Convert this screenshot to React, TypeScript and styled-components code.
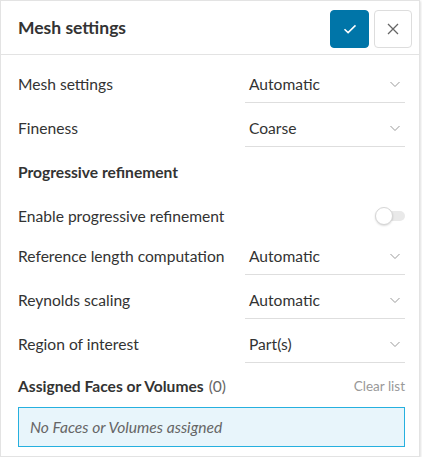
import React from "react";
import styled, { createGlobalStyle } from "styled-components";

const Global = createGlobalStyle`
  html, body { margin: 0; padding: 0; background: #ffffff; }
  body { font-family: Lato, "Open Sans", sans-serif; color: #333333; }
  * { box-sizing: border-box; }
`;

const Panel = styled.div`
  width: 420px;
  height: 457px;
  background: #ffffff;
  border: 1px solid #e3e3e3;
  box-shadow: 1px 1px 2px rgba(0, 0, 0, 0.12);
  display: flex;
  flex-direction: column;
`;

const Header = styled.div`
  height: 54px;
  display: flex;
  align-items: center;
  padding: 0 7px 0 17px;
  border-bottom: 1px solid #e3e3e3;
  gap: 5px;
`;

const Title = styled.h1`
  flex: 1;
  margin: 0;
  font-size: 17.5px;
  font-weight: 700;
  color: #333333;
`;

const IconButton = styled.button<{ $primary?: boolean }>`
  width: ${(p) => (p.$primary ? "39px" : "38px")};
  height: 38px;
  margin-top: 2px;
  border-radius: 4px;
  border: 1px solid ${(p) => (p.$primary ? "#0075a8" : "#dddddd")};
  background: ${(p) => (p.$primary ? "#0075a8" : "#ffffff")};
  display: flex;
  align-items: center;
  justify-content: center;
  padding: 0;
  cursor: pointer;
`;

const Body = styled.div`
  padding: 4px 14px 0 17px;
  display: flex;
  flex-direction: column;
`;

const Row = styled.div<{ $short?: boolean }>`
  height: ${(p) => (p.$short ? "40px" : "44px")};
  display: grid;
  grid-template-columns: 1fr 160px;
  align-items: start;
`;

const Label = styled.div<{ $bold?: boolean }>`
  margin-top: 6px;
  height: 38px;
  display: flex;
  align-items: center;
  font-size: 15.6px;
  font-weight: ${(p) => (p.$bold ? 700 : 400)};
  color: #333333;
  white-space: nowrap;
`;

const Select = styled.div`
  margin-top: 6px;
  height: 38px;
  display: flex;
  align-items: center;
  justify-content: space-between;
  padding: 0 4px 0 4px;
  border-bottom: 1px solid #dedede;
  font-size: 15.6px;
  color: #333333;
`;

const ToggleWrap = styled.div`
  margin-top: 6px;
  height: 38px;
  display: flex;
  align-items: center;
  justify-content: flex-end;
  grid-column: 2;
`;

const Track = styled.div`
  position: relative;
  width: 22px;
  height: 10px;
  border-radius: 5px;
  background: #e9e9e9;
`;

const Knob = styled.div`
  position: absolute;
  left: -8px;
  top: -4px;
  width: 18px;
  height: 18px;
  border-radius: 50%;
  background: #ffffff;
  border: 1px solid #d6d6d6;
  box-shadow: 0 1px 2px rgba(0, 0, 0, 0.15);
`;

const ListHeader = styled.div`
  margin-top: 10px;
  height: 26px;
  display: flex;
  align-items: center;
  justify-content: space-between;
`;

const ListTitle = styled.div`
  font-size: 15.6px;
  font-weight: 700;
  color: #333333;
`;

const Count = styled.span`
  font-weight: 400;
  color: #666666;
  margin-left: 5px;
`;

const ClearLink = styled.span`
  font-size: 13.5px;
  color: #999999;
`;

const EmptyBox = styled.div`
  margin-top: 8px;
  height: 40px;
  border: 1px solid #26b0df;
  background: #e8f5fb;
  display: flex;
  align-items: center;
  padding: 0 11px;
  font-size: 15.6px;
  font-style: italic;
  color: #666666;
`;

const Chevron = () => (
  <svg width="12" height="12" viewBox="0 0 12 12" fill="none">
    <path d="M1.5 4l4.5 4.5L10.5 4" stroke="#9a9a9a" strokeWidth="1" />
  </svg>
);

const SelectRow = ({ label, value }: { label: string; value: string }) => (
  <Row>
    <Label>{label}</Label>
    <Select>
      <span>{value}</span>
      <Chevron />
    </Select>
  </Row>
);

export default function App() {
  return (
    <>
      <Global />
      <Panel>
        <Header>
          <Title>Mesh settings</Title>
          <IconButton $primary aria-label="Confirm">
            <svg width="16" height="16" viewBox="0 0 16 16" fill="none">
              <path d="M2.5 8.2l3.6 3.4 7.4-7.2" stroke="#fff" strokeWidth="1.5" />
            </svg>
          </IconButton>
          <IconButton aria-label="Close">
            <svg width="14" height="14" viewBox="0 0 14 14" fill="none">
              <path d="M2 2l10 10M12 2L2 12" stroke="#666" strokeWidth="1.3" />
            </svg>
          </IconButton>
        </Header>
        <Body>
          <SelectRow label="Mesh settings" value="Automatic" />
          <SelectRow label="Fineness" value="Coarse" />
          <Row>
            <Label $bold>Progressive refinement</Label>
          </Row>
          <Row $short>
            <Label>Enable progressive refinement</Label>
            <ToggleWrap>
              <Track>
                <Knob />
              </Track>
            </ToggleWrap>
          </Row>
          <SelectRow label="Reference length computation" value="Automatic" />
          <SelectRow label="Reynolds scaling" value="Automatic" />
          <SelectRow label="Region of interest" value="Part(s)" />
          <ListHeader>
            <ListTitle>
              Assigned Faces or Volumes<Count>(0)</Count>
            </ListTitle>
            <ClearLink>Clear list</ClearLink>
          </ListHeader>
          <EmptyBox>No Faces or Volumes assigned</EmptyBox>
        </Body>
      </Panel>
    </>
  );
}
